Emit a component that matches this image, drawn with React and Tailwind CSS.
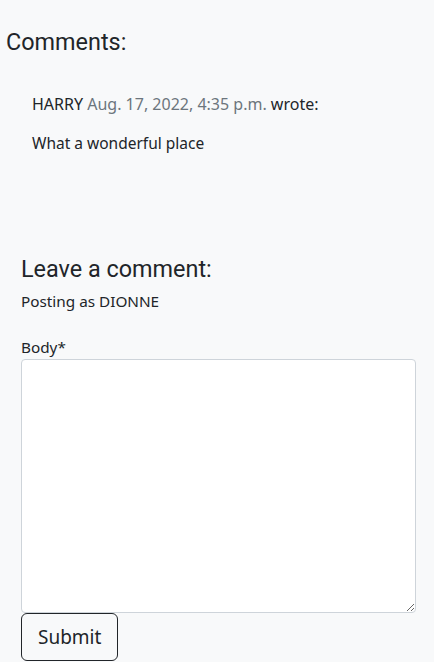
import React from "react";

export default function App() {
  return (
    <div className="min-h-[662px] w-[434px] bg-[#f8f9fa] text-[#212529]" style={{ fontFamily: '"Noto Sans", sans-serif' }}>
      <div className="pt-[28px] pl-[6px]">
        <h3 className="text-[23.4px] leading-[28px] font-normal" style={{ fontFamily: 'Roboto, sans-serif' }}>Comments:</h3>
      </div>
      <div className="pl-[32px] pt-[36px]">
        <p className="text-[16px] leading-[24px]">
          HARRY <span className="text-[#6c757d]">Aug. 17, 2022, 4:35 p.m.</span> wrote:
        </p>
        <p className="mt-[15px] text-[15.5px] leading-[24px]">What a wonderful place</p>
      </div>
      <div className="px-[21px] pr-[18px] pt-[100px]">
        <h3 className="text-[23.4px] leading-[28px] font-normal" style={{ fontFamily: 'Roboto, sans-serif' }}>Leave a comment:</h3>
        <p className="mt-[6px] text-[15.3px] leading-[24px]">Posting as DIONNE</p>
        <label className="mt-[22px] block text-[15.3px] leading-[24px]">Body*</label>
        <textarea className="block h-[254px] w-full rounded-[4px] border border-[#ced4da] bg-white" />
        <button className="rounded-[6px] border border-[#212529] px-4 py-2 text-[19px] leading-[30px]">Submit</button>
      </div>
    </div>
  );
}
